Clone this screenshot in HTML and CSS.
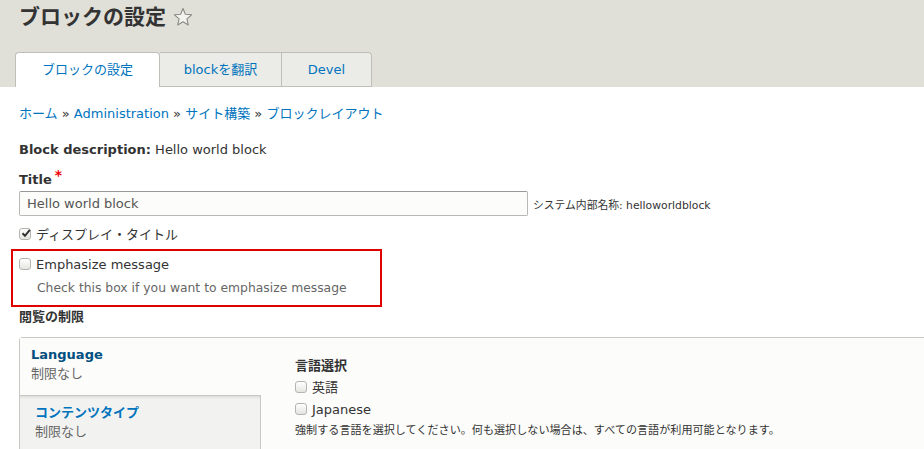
FILE: index.html
```html
<!DOCTYPE html>
<html lang="ja">
<head>
<meta charset="utf-8">
<title>ブロックの設定</title>
<link rel="stylesheet" href="styles.css">
</head>
<body>
<header class="header">
  <h1 class="page-title">ブロックの設定 <svg class="star" width="20" height="20" viewBox="0 0 20 20"><path d="M10 1.5 L12.4 7.3 L18.6 7.8 L13.9 11.9 L15.3 18 L10 14.8 L4.7 18 L6.1 11.9 L1.4 7.8 L7.6 7.3 Z" fill="#f2f2ee" stroke="#8a8a84" stroke-width="1.1" stroke-linejoin="round"/></svg></h1>
  <nav class="tabs">
    <a class="tab active">ブロックの設定</a>
    <a class="tab t2">blockを翻訳</a>
    <a class="tab t3">Devel</a>
  </nav>
</header>
<main class="content">
  <div class="breadcrumb"><a>ホーム</a> » <a>Administration</a> » <a>サイト構築</a> » <a>ブロックレイアウト</a></div>
  <p class="desc-line"><strong>Block description:</strong> Hello world block</p>
  <div class="field">
    <label class="field-label">Title<span class="req">*</span></label>
    <div class="input-row">
      <div class="text-input">Hello world block</div>
      <span class="machine">システム内部名称: helloworldblock</span>
    </div>
  </div>
  <div class="check-row"><span class="cb checked"><svg width="10" height="10" viewBox="0 0 10 10"><path d="M1.5 5.2 L4 7.8 L8.8 1.8" fill="none" stroke="#333" stroke-width="2"/></svg></span><span>ディスプレイ・タイトル</span></div>
  <div class="highlight">
    <div class="check-row"><span class="cb"></span><span>Emphasize message</span></div>
    <div class="help">Check this box if you want to emphasize message</div>
  </div>
  <div class="section-title">閲覧の制限</div>
  <div class="vtabs">
    <ul class="vtabs-menu">
      <li class="vtab selected"><span class="vtab-title">Language</span><span class="vtab-sum">制限なし</span></li>
      <li class="vtab"><span class="vtab-title">コンテンツタイプ</span><span class="vtab-sum">制限なし</span></li>
    </ul>
    <div class="vtabs-pane">
      <div class="pane-label">言語選択</div>
      <div class="check-row small"><span class="cb"></span><span>英語</span></div>
      <div class="check-row small second"><span class="cb"></span><span>Japanese</span></div>
      <div class="pane-help">強制する言語を選択してください。何も選択しない場合は、すべての言語が利用可能となります。</div>
    </div>
  </div>
</main>
</body>
</html>
```
FILE: styles.css
```css
html { overflow: hidden; }
body {
  margin: 0;
  font-family: "DejaVu Sans", "Noto Sans CJK JP", sans-serif;
  font-size: 13px;
  color: #333;
  background: #fff;
}
.header {
  background: #e0e0d8;
  padding: 0 0 0 15px;
}
.page-title {
  margin: 0;
  padding: 2px 0 0 4px;
  box-sizing: border-box;
  height: 52px;
  font-size: 21px;
  line-height: 30px;
  font-weight: bold;
  color: #333;
  display: flex;
  align-items: flex-start;
}
.star { margin: 5px 0 0 7px; }
.tabs {
  display: flex;
  height: 35px;
}
.tab {
  display: block;
  box-sizing: border-box;
  height: 35px;
  line-height: 33px;
  text-align: center;
  color: #0074bd;
  font-size: 13px;
  background: #ebebe7;
  border: 1px solid #bfbfba;
  border-left: 0;
}
.tab.active {
  width: 145px;
  background: #fff;
  border-left: 1px solid #bfbfba;
  border-bottom: 0;
  border-radius: 4px 4px 0 0;
  line-height: 34px;
}
.tab.t2 { width: 122px; }
.tab.t3 { width: 90px; border-radius: 0 4px 0 0; }
.content { padding: 0 19px; }
.breadcrumb {
  margin: 19px 0 0;
  line-height: 16px;
  color: #333;
}
.breadcrumb a { color: #0074bd; }
.desc-line {
  margin: 20px 0 0;
  line-height: 16px;
}
.field { margin-top: 13px; }
.field-label {
  display: block;
  font-weight: bold;
  line-height: 16px;
}
.req { color: #e00; margin-left: 3px; position: relative; top: -4px; font-size: 14px; }
.input-row {
  display: flex;
  align-items: center;
  margin-top: 3px;
}
.text-input {
  box-sizing: border-box;
  width: 509px;
  height: 25px;
  line-height: 23px;
  border: 1px solid #b8b8b8;
  border-top-color: #999;
  border-radius: 2px;
  background: #fcfcfa;
  padding: 0 7px;
  font-size: 13px;
  color: #555;
}
.machine { font-size: 10.8px; margin-left: 5px; }
.check-row {
  display: flex;
  align-items: center;
  line-height: 18px;
  margin-top: 10px;
}
.cb {
  box-sizing: border-box;
  width: 12px;
  height: 12px;
  border: 1px solid #b5b5b0;
  border-radius: 3px;
  background: linear-gradient(#fff, #e4e4e0);
  margin-right: 5px;
  display: flex;
  align-items: center;
  justify-content: center;
  position: relative;
  top: -1px;
}
.cb svg { position: relative; top: -1px; left: 1px; }
.highlight {
  box-sizing: border-box;
  width: 371px;
  margin: 5px 0 0 -8px;
  padding: 0 6px 9px;
  border: 2px solid #e00000;
}
.highlight .check-row { margin-top: 5px; }
.help {
  font-size: 12.35px;
  color: #666;
  margin: 6px 0 0 18px;
  line-height: 16px;
}
.section-title {
  font-weight: bold;
  margin-top: 2px;
  line-height: 16px;
}
.vtabs {
  display: flex;
  margin-top: 12px;
  width: 1000px;
  border: 1px solid #c8c8c4;
  border-right: 0;
  border-radius: 4px 0 0 0;
  background: #fcfcfa;
  height: 120px;
}
.vtabs-menu {
  list-style: none;
  margin: 0;
  padding: 0;
  width: 241px;
  flex: none;
}
.vtab {
  display: flex;
  flex-direction: column;
  padding: 7px 10px 9px 15px;
  line-height: 19px;
  background: #f2f2f0;
  border-right: 1px solid #c8c8c4;
  border-top: 1px solid #c8c8c4;
  box-shadow: inset 0 3px 3px -2px rgba(0,0,0,0.12);
  height: 57px;
  box-sizing: border-box;
}
.vtab.selected {
  background: #fcfcfa;
  border: 0;
  box-shadow: none;
  padding-left: 11px;
  height: 57px;
}
.vtab-title { font-weight: bold; color: #0074bd; }
.vtab.selected .vtab-title { color: #004f80; }
.vtab-sum { color: #666; }
.vtabs-pane { padding: 20px 0 0 34px; }
.pane-label { font-weight: 600; line-height: 16px; }
.check-row.small { margin-top: 5px; }
.check-row.small.second { margin-top: 4px; }
.pane-help { font-size: 11.1px; margin-top: 4px; line-height: 16px; }
```
